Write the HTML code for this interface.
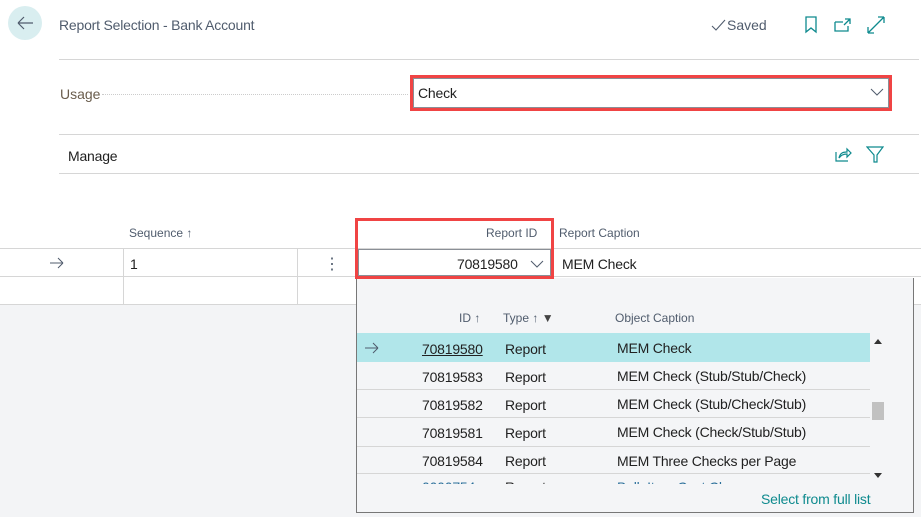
<!DOCTYPE html>
<html><head><style>
*{margin:0;padding:0;box-sizing:border-box}
body{width:921px;height:517px;overflow:hidden;background:#fff;font-family:"Liberation Sans",sans-serif;position:relative;color:#212121}
.a{position:absolute}
.t{font-size:14px;color:#505c6d}
.h{font-size:12px;color:#505c6d}
.line{position:absolute;height:1px;background:#d6d6d6}
.vl{position:absolute;width:1px;background:#d6d6d6}
.r{font-size:14px;letter-spacing:-0.2px}
</style></head><body>
<div class="a" style="left:8px;top:6px;width:34px;height:34px;border-radius:50%;background:#d9eef0"></div>
<svg class="a" style="left:15px;top:14px" width="20" height="18"><path d="M3 9H18M3 9L9 3M3 9L9 15" stroke="#505c6d" stroke-width="1.2" fill="none"/></svg>
<div class="a t" style="left:59px;top:17px;letter-spacing:-0.2px">Report Selection - Bank Account</div>
<svg class="a" style="left:711px;top:18px" width="16" height="14"><path d="M1 8L5 12L14 2" stroke="#505c6d" stroke-width="1.1" fill="none"/></svg>
<div class="a t" style="left:727px;top:17px">Saved</div>
<svg class="a" style="left:803px;top:16px" width="16" height="18"><path d="M3 1H13V16L8 12L3 16Z" stroke="#0e8a8e" stroke-width="1.3" fill="none"/></svg>
<svg class="a" style="left:833px;top:16px" width="20" height="18"><path d="M2 6H10M2 6V15H15V10M12 3H17V8M17 3L11 9" stroke="#0e8a8e" stroke-width="1.3" fill="none"/></svg>
<svg class="a" style="left:866px;top:15px" width="20" height="20"><path d="M2 18L18 2M2 18V12M2 18H8M18 2H12M18 2V8" stroke="#0e8a8e" stroke-width="1.3" fill="none"/></svg>
<div class="line" style="left:59px;top:59px;width:860px"></div>
<div class="a t" style="left:60px;top:86px;color:#6a5d4d">Usage</div>
<div class="a" style="left:102px;top:94px;width:306px;border-top:1px dotted #ccc"></div>
<div class="a" style="left:410px;top:75px;width:482px;height:36px;border:3px solid #f04444"></div>
<div class="a" style="left:413px;top:78px;width:476px;height:30px;border:1px solid #8a8f96;background:#fff"></div>
<div class="a r" style="left:418px;top:85px;color:#212121">Check</div>
<svg class="a" style="left:870px;top:87px" width="14" height="10"><path d="M1 2L7 8L13 2" stroke="#505c6d" stroke-width="1" fill="none"/></svg>
<div class="line" style="left:59px;top:134px;width:860px"></div>
<div class="a r" style="left:68px;top:148px;color:#212121">Manage</div>
<svg class="a" style="left:834px;top:145px" width="18" height="18"><path d="M2 7V16H14M5 13C6 8 9 7 13 7V4L17 8L13 12V9C10 9 7 10 5 13Z" stroke="#0e8a8e" stroke-width="1.2" fill="none"/></svg>
<svg class="a" style="left:866px;top:146px" width="18" height="18"><path d="M1 1H17L11 9V16H8V9Z" stroke="#0e8a8e" stroke-width="1.2" fill="none"/></svg>
<div class="line" style="left:59px;top:173px;width:860px"></div>
<div class="a h" style="left:129px;top:226px">Sequence ↑</div>
<div class="a h" style="left:486px;top:226px">Report ID</div>
<div class="a h" style="left:559px;top:226px">Report Caption</div>
<div class="line" style="left:0;top:248px;width:921px"></div>
<div class="line" style="left:0;top:276px;width:921px"></div>
<div class="line" style="left:0;top:304px;width:921px"></div>
<div class="a" style="left:0;top:305px;width:921px;height:212px;background:#f3f4f6"></div>
<div class="vl" style="left:123px;top:248px;height:56px"></div>
<div class="vl" style="left:297px;top:248px;height:56px"></div>
<svg class="a" style="left:49px;top:257px" width="16" height="12"><path d="M1 6H14M14 6L9 1M14 6L9 11" stroke="#505c6d" stroke-width="1" fill="none"/></svg>
<div class="a r" style="left:130px;top:256px">1</div>
<div class="a" style="left:324px;top:254px;font-size:16px;color:#505c6d">⋮</div>
<div class="a" style="left:356px;top:278px;width:558px;height:235px;background:#f4f5f7;border:1px solid #777;border-top:none"></div>
<div class="a" style="left:355px;top:218px;width:199px;height:61px;border:3px solid #f04444"></div>
<div class="a" style="left:358px;top:249px;width:193px;height:27px;border:1px solid #8a8f96;background:#fff"></div>
<div class="a r" style="left:457px;top:256px">70819580</div>
<svg class="a" style="left:530px;top:259px" width="14" height="10"><path d="M1 2L7 8L13 2" stroke="#505c6d" stroke-width="1" fill="none"/></svg>
<div class="a r" style="left:562px;top:256px">MEM Check</div>
<div class="a h" style="left:459px;top:311px">ID ↑</div>
<div class="a h" style="left:503px;top:311px">Type ↑ <span style="color:#444">▼</span></div>
<div class="a h" style="left:615px;top:311px">Object Caption</div>
<div class="a" style="left:357px;top:333px;width:513px;height:29px;background:#b1e6ea"></div>
<div class="line" style="left:357px;top:389px;width:513px"></div>
<div class="line" style="left:357px;top:417px;width:513px"></div>
<div class="line" style="left:357px;top:446px;width:513px"></div>
<div class="line" style="left:357px;top:473px;width:513px"></div>
<svg class="a" style="left:364px;top:342px" width="16" height="12"><path d="M1 6H14M14 6L9 1M14 6L9 11" stroke="#505c6d" stroke-width="1" fill="none"/></svg>
<div class="a r" style="left:422px;top:341px;text-decoration:underline">70819580</div>
<div class="a r" style="left:422px;top:369px">70819583</div>
<div class="a r" style="left:422px;top:397px">70819582</div>
<div class="a r" style="left:422px;top:425px">70819581</div>
<div class="a r" style="left:422px;top:453px">70819584</div>
<div class="a r" style="left:505px;top:341px">Report</div>
<div class="a r" style="left:505px;top:369px">Report</div>
<div class="a r" style="left:505px;top:397px">Report</div>
<div class="a r" style="left:505px;top:425px">Report</div>
<div class="a r" style="left:505px;top:453px">Report</div>
<div class="a r" style="left:617px;top:340px">MEM Check</div>
<div class="a r" style="left:617px;top:368px">MEM Check (Stub/Stub/Check)</div>
<div class="a r" style="left:617px;top:396px">MEM Check (Stub/Check/Stub)</div>
<div class="a r" style="left:617px;top:424px">MEM Check (Check/Stub/Stub)</div>
<div class="a r" style="left:617px;top:453px">MEM Three Checks per Page</div>
<div class="a" style="left:357px;top:474px;width:513px;height:10px;overflow:hidden"><div class="r" style="position:absolute;left:65px;top:5px;color:#2a6f9a">0000754</div><div class="r" style="position:absolute;left:148px;top:5px">Report</div><div class="r" style="position:absolute;left:260px;top:5px;color:#2a6f9a">Bulk Item Cost Change</div></div>
<div class="a" style="left:874px;top:339px;width:0;height:0;border-left:4px solid transparent;border-right:4px solid transparent;border-bottom:5px solid #333"></div>
<div class="a" style="left:874px;top:473px;width:0;height:0;border-left:4px solid transparent;border-right:4px solid transparent;border-top:5px solid #333"></div>
<div class="a" style="left:872px;top:402px;width:12px;height:18px;background:#c1c1c1"></div>
<div class="a r" style="left:761px;top:491px;color:#0e8a8e">Select from full list</div>
</body></html>
